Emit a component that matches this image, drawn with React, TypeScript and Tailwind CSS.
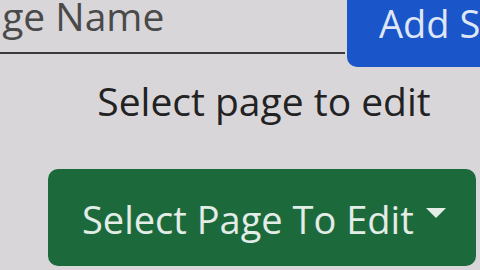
import { useState } from 'react'

export default function App() {
  const [name, setName] = useState('')

  return (
    <div className="w-[480px] h-[270px] overflow-hidden bg-[#d9d6da] font-['Open_Sans','Noto_Sans',sans-serif]">
      <div className="w-[528px] flex flex-col items-center">

        {/* Add page row */}
        <div className="self-start flex items-start ml-[-47px] mt-[-14px]">
          <input
            value={name}
            onChange={e => setName(e.target.value)}
            placeholder="Page Name"
            className="w-[392px] h-[68px] pl-[4px] pb-[8px] bg-transparent border-b-2 border-[#3a3a3a] text-[39px] text-[#4a4a4a] placeholder:text-[#4a4a4a] outline-none"
          />
          <button className="ml-[2px] w-[200px] h-[81px] pl-[32px] pb-[6px] text-left rounded-[10px] bg-[#1a55c9] text-[#dfe6f5] text-[38px] whitespace-nowrap">
            Add S
          </button>
        </div>

        <p className="mt-[10px] text-[39px] leading-[48px] text-[#222]">Select page to edit</p>

        {/* Page picker */}
        <button className="mt-[44px] ml-[-4px] w-[428px] h-[97px] rounded-[10px] bg-[#1c6a3c] text-[#e3ece6] text-[38px] flex items-center pl-[34px] pt-[4px] gap-[12px]">
          <span>Select Page To Edit</span>
          <svg width="20" height="11" viewBox="0 0 20 11" className="mb-[12px]">
            <path d="M0 0 H20 L10 10 Z" fill="#e3ece6" />
          </svg>
        </button>

      </div>
    </div>
  )
}
